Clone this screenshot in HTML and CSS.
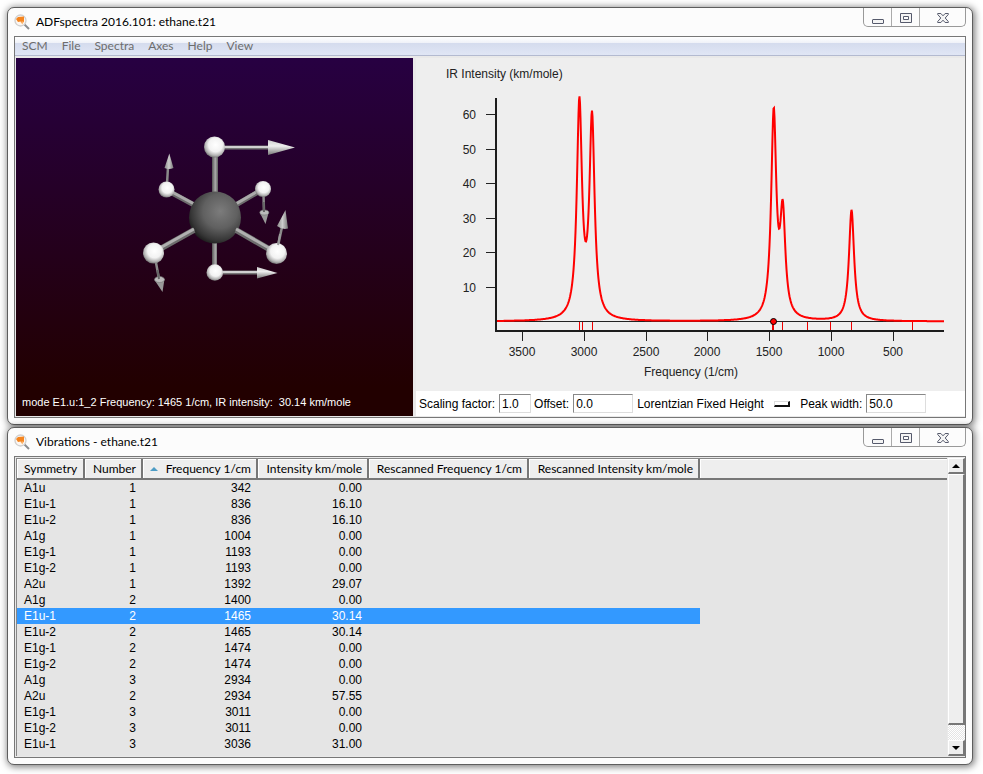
FILE: index.html
```html
<!DOCTYPE html>
<html lang="en">
<head>
<meta charset="utf-8">
<title>ADFspectra 2016.101: ethane.t21</title>
<link rel="stylesheet" href="styles.css">
</head>
<body>
<svg class="defs" width="0" height="0" aria-hidden="true">
  <symbol id="app" viewBox="0 0 16 16">
    <path d="M10.5 10.5 15 15" stroke="#8b8d91" stroke-width="2"/>
    <circle cx="6.500" cy="6.500" r="5.500" fill="#fdf6f0" stroke="#cfcfcf" stroke-width="1.300"/>
    <path d="M2 5 4 3l6-.5V8L8 9 6.500 7.500 4 8Z" fill="#f5851f"/>
    <path d="m6.500 8 2 2.500L9.500 7Z" fill="#fbb36c"/>
  </symbol>
  <symbol id="min" viewBox="0 0 12 12"><rect x=".5" y="6.500" width="11" height="4" rx=".5" fill="#f4f4f4" stroke="#565a6c"/></symbol>
  <symbol id="max" viewBox="0 0 12 12"><path d="M.5 .5h11v9H.5Zm3 3v3h5v-3Z" fill="#f4f4f4" fill-rule="evenodd" stroke="#565a6c"/></symbol>
  <symbol id="close" viewBox="0 0 12 12"><path d="M.7 .5h3.200L6 2.800l2.100-2.300h3.200v1L8.200 5l3.100 3.500v1H8.100L6 7.200l-2.100 2.300H.7v-1L3.800 5 .7 1.500Z" fill="#f4f4f4" stroke="#565a6c"/></symbol>
</svg>

<main class="desktop">
  <section class="window">
    <header class="titlebar">
      <svg class="app-icon" aria-hidden="true"><use href="#app"/></svg>
      <h1>ADFspectra 2016.101: ethane.t21</h1>
      <div class="window-buttons">
        <button aria-label="Minimize"><svg><use href="#min"/></svg></button>
        <button aria-label="Maximize"><svg><use href="#max"/></svg></button>
        <button class="close" aria-label="Close"><svg><use href="#close"/></svg></button>
      </div>
    </header>
    <div class="frame">
      <nav class="menu">
        <button>SCM</button><button>File</button><button>Spectra</button><button>Axes</button><button>Help</button><button>View</button>
      </nav>
      <div class="panes">
        <div class="molecule">
          <svg viewBox="16 58 397 330" aria-label="Ethane vibration">
            <defs>
              <radialGradient id="h" cx=".55" cy=".4" r=".6"><stop offset="0" stop-color="#fff"/><stop offset=".55" stop-color="#f2f2f2"/><stop offset=".85" stop-color="#b0b0b0"/><stop offset="1" stop-color="#777"/></radialGradient>
              <radialGradient id="c" cx=".6" cy=".38" r=".66"><stop offset="0" stop-color="#7c7c7c"/><stop offset=".5" stop-color="#606060"/><stop offset=".85" stop-color="#363636"/><stop offset="1" stop-color="#1c1c1c"/></radialGradient>
              <linearGradient id="rod"><stop offset="0" stop-color="#555"/><stop offset=".55" stop-color="#aaa"/><stop offset="1" stop-color="#606060"/></linearGradient>
              <linearGradient id="cone" x2="0" y2="1"><stop offset="0" stop-color="#ccc"/><stop offset=".4" stop-color="#eee"/><stop offset="1" stop-color="#777"/></linearGradient>
              <linearGradient id="up"><stop offset="0" stop-color="#888"/><stop offset=".5" stop-color="#ccc"/><stop offset="1" stop-color="#777"/></linearGradient>
            </defs>
            <path d="M212 155h6v40h-6zM212 240h5v26h-5z" fill="url(#rod)"/>
            <g stroke="#6d6d6d" stroke-width="5"><path d="M172 193 196 206M258 192 234 206"/></g>
            <g stroke="#aaa" stroke-width="3"><path d="M172 192 196 205M258 191 234 205"/></g>
            <circle cx="215" cy="217.500" r="26" fill="url(#c)"/>
            <path d="M160 249 194 230M269 249 236 230" stroke="#6d6d6d" stroke-width="6"/>
            <path d="M160 248 194 229M269 248 236 229" stroke="#b0b0b0" stroke-width="3"/>
            <path d="M224 147.500h45M222 272.500h36" stroke="#777" stroke-width="4"/>
            <path d="M224 147h45M222 272h36" stroke="#d0d0d0" stroke-width="2"/>
            <path d="M268 140 295 147.500 268 155Z" fill="url(#cone)"/>
            <path d="M257 267 277.500 273 257 278.500Z" fill="url(#cone)"/>
            <path d="M167 184 168 167M263.500 195 264 212M155.500 260 159 279M278 246 282 227" stroke="#8a8a8a" stroke-width="2.500"/>
            <path d="M169.300 153.500 173.500 168Q169 170 164.500 168Z" fill="url(#up)"/>
            <path d="M285.500 210 288 228.500Q282 230 277 226Z" fill="url(#up)"/>
            <path d="M260 213 265.500 224 268.500 213ZM154.500 280 162.500 292 164.500 279Z" fill="#999"/>
            <g fill="#bbb" stroke="#777" stroke-width=".6"><ellipse cx="264.300" cy="212.500" rx="4.500" ry="2.500"/><ellipse cx="159.500" cy="279.500" rx="5" ry="3"/></g>
            <path d="M263.700 202 264 212M157.500 270 159 279" stroke="#666" stroke-width="2"/>
            <g fill="url(#h)"><circle cx="214.500" cy="147" r="10.500"/><circle cx="166.500" cy="189.500" r="8"/><circle cx="263" cy="189" r="8"/><circle cx="153.500" cy="253" r="10.500"/><circle cx="276.500" cy="253.500" r="10.500"/><circle cx="214.800" cy="272.500" r="8.300"/></g>
            <path d="M278 245 280 234" stroke="#999" stroke-width="2"/>
          </svg>
          <p>mode E1.u:1_2 Frequency: 1465 1/cm, IR intensity:&nbsp; 30.14 km/mole</p>
        </div>
        <div class="spectrum">
          <svg class="chart" viewBox="416 58 549 333" aria-label="IR spectrum">
            <text x="446" y="78">IR Intensity (km/mole)</text>
            <g class="end">
              <text x="476" y="119">60</text><text x="476" y="154">50</text><text x="476" y="188">40</text><text x="476" y="223">30</text><text x="476" y="257">20</text><text x="476" y="292">10</text>
            </g>
            <g class="middle">
              <text x="522" y="356">3500</text><text x="584" y="356">3000</text><text x="646" y="356">2500</text><text x="707" y="356">2000</text><text x="769" y="356">1500</text><text x="831" y="356">1000</text><text x="893" y="356">500</text>
              <text x="691" y="376">Frequency (1/cm)</text>
            </g>
            <path class="ticks" d="M486 114.500h10M486 149.500h10M486 183.500h10M486 218.500h10M486 252.500h10M486 287.500h10M522.500 331v10M584.500 331v10M646.500 331v10M707.500 331v10M769.500 331v10M831.500 331v10M893.500 331v10M497 321.500h447"/>
            <path class="modes" d="M579.500 322v8M582.500 322v8M592.500 322v8M772.500 322v8M773.500 322v8M782.500 322v8M807.500 322v8M830.500 322v8M851.500 322v8M912.500 322v8"/>
            <path class="axes" d="M496 98v233h448"/>
            <polyline id="curve" points=""/>
            <circle cx="773.500" cy="321.500" r="3" fill="#f00" stroke="#000"/>
          </svg>
          <form class="controls">
            <label for="scale">Scaling factor:</label><input id="scale" class="short" value="1.0">
            <label for="offset">Offset:</label><input id="offset" value="0.0">
            <span class="shape"><select aria-label="Peak shape"><option>Lorentzian Fixed Height</option></select><i></i></span>
            <label for="width">Peak width:</label><input id="width" value="50.0">
          </form>
        </div>
      </div>
    </div>
  </section>

  <section class="window">
    <header class="titlebar">
      <svg class="app-icon" aria-hidden="true"><use href="#app"/></svg>
      <h1>Vibrations - ethane.t21</h1>
      <div class="window-buttons">
        <button aria-label="Minimize"><svg><use href="#min"/></svg></button>
        <button aria-label="Maximize"><svg><use href="#max"/></svg></button>
        <button class="close" aria-label="Close"><svg><use href="#close"/></svg></button>
      </div>
    </header>
    <div class="frame list">
      <div class="table-area">
        <table>
          <colgroup><col class="c1"><col class="c2"><col class="c3"><col class="c4"><col class="c5"><col class="c6"><col></colgroup>
          <thead><tr><th>Symmetry</th><th>Number</th><th class="sorted">Frequency 1/cm</th><th>Intensity km/mole</th><th>Rescanned Frequency 1/cm</th><th>Rescanned Intensity km/mole</th><th></th></tr></thead>
          <tbody>
            <tr><td>A1u</td><td>1</td><td>342</td><td>0.00</td><td></td><td></td></tr>
            <tr><td>E1u-1</td><td>1</td><td>836</td><td>16.10</td><td></td><td></td></tr>
            <tr><td>E1u-2</td><td>1</td><td>836</td><td>16.10</td><td></td><td></td></tr>
            <tr><td>A1g</td><td>1</td><td>1004</td><td>0.00</td><td></td><td></td></tr>
            <tr><td>E1g-1</td><td>1</td><td>1193</td><td>0.00</td><td></td><td></td></tr>
            <tr><td>E1g-2</td><td>1</td><td>1193</td><td>0.00</td><td></td><td></td></tr>
            <tr><td>A2u</td><td>1</td><td>1392</td><td>29.07</td><td></td><td></td></tr>
            <tr><td>A1g</td><td>2</td><td>1400</td><td>0.00</td><td></td><td></td></tr>
            <tr class="selected"><td>E1u-1</td><td>2</td><td>1465</td><td>30.14</td><td></td><td></td></tr>
            <tr><td>E1u-2</td><td>2</td><td>1465</td><td>30.14</td><td></td><td></td></tr>
            <tr><td>E1g-1</td><td>2</td><td>1474</td><td>0.00</td><td></td><td></td></tr>
            <tr><td>E1g-2</td><td>2</td><td>1474</td><td>0.00</td><td></td><td></td></tr>
            <tr><td>A1g</td><td>3</td><td>2934</td><td>0.00</td><td></td><td></td></tr>
            <tr><td>A2u</td><td>2</td><td>2934</td><td>57.55</td><td></td><td></td></tr>
            <tr><td>E1g-1</td><td>3</td><td>3011</td><td>0.00</td><td></td><td></td></tr>
            <tr><td>E1g-2</td><td>3</td><td>3011</td><td>0.00</td><td></td><td></td></tr>
            <tr><td>E1u-1</td><td>3</td><td>3036</td><td>31.00</td><td></td><td></td></tr>
          </tbody>
        </table>
      </div>
      <div class="scrollbar">
        <button aria-label="Scroll up"><svg viewBox="0 0 8 4"><path d="M0 4 4 0l4 4Z"/></svg></button>
        <div class="thumb"></div>
        <div class="track"></div>
        <button aria-label="Scroll down"><svg viewBox="0 0 8 4"><path d="M0 0 4 4l4-4Z"/></svg></button>
      </div>
    </div>
  </section>
</main>
<script src="spectrum.js"></script>
</body>
</html>
```
FILE: styles.css
```css
* { box-sizing: border-box; }
body {
  margin: 0;
  background: #fff;
  color: #000;
  font: 12px/16px "Liberation Sans", Arial, sans-serif;
}
.defs { position: absolute; }
button, input, select { font: inherit; color: inherit; }

.desktop {
  display: flex;
  flex-direction: column;
  gap: 2px;
  padding: 7px 10px 9px 7px;
}
.window {
  padding: 0 6px 6px;
  border: 1px solid #5e5e5e;
  border-radius: 7px;
  background: #fcfcfc;
  box-shadow: 1px 1px 7px 1px rgba(0, 0, 0, .5);
}
.titlebar {
  display: flex;
  align-items: flex-start;
  height: 28px;
}
.app-icon { width: 16px; height: 16px; margin-top: 6px; }
h1 {
  flex: 1;
  margin: 6px 0 0 6px;
  font: 12px/16px Lato, sans-serif;
}
.window-buttons {
  display: flex;
  height: 19px;
  border: 1px solid #999;
  border-top: 0;
  border-radius: 0 0 5px 5px;
}
.window-buttons button {
  width: 28px;
  padding: 3px 0 0;
  border: 0;
  border-right: 1px solid #aaa;
  background: none;
}
.window-buttons .close { width: 45px; border: 0; }
.window-buttons svg { display: block; width: 12px; height: 12px; margin: 0 auto; }

.frame {
  border: 1px solid #777;
  background: #e9e9e9;
}
.menu {
  display: flex;
  gap: 14px;
  height: 19px;
  padding: 0 7px;
  border-bottom: 1px solid #b3bad0;
  background: linear-gradient(#fff, #eef1f8 35%, #d5dcee 36%, #e0e6f5);
}
.menu button {
  padding: 0;
  border: 0;
  background: none;
  color: #6d6d6d;
  font: 12px/18px Lato, sans-serif;
}
.panes {
  display: grid;
  grid-template-columns: 397fr 549fr;
  gap: 3px;
  padding: 2px 0 1px 1px;
}
.molecule {
  display: flex;
  flex-direction: column;
  justify-content: space-between;
  background: linear-gradient(#270042, #220000 92%);
  color: #fff;
  font-size: 11px;
}
.molecule svg, .chart { display: block; width: 100%; }
.molecule p { margin: 0 6px 6px; }
.spectrum { background: #eee; }
.chart text { fill: #222; }
.chart .end { text-anchor: end; }
.chart .middle { text-anchor: middle; }
.ticks { stroke: #222; }
.modes { stroke: #e00; }
.axes { fill: none; stroke: #1c1c1c; stroke-width: 2; }
#curve { fill: none; stroke: #f00; stroke-width: 2; }
.controls {
  display: flex;
  align-items: center;
  gap: 3px;
  height: 25px;
  padding: 0 3px;
  background: #fff;
}
.controls label { margin-right: 1px; }
.controls input {
  width: 60px;
  height: 19px;
  padding: 0 2px;
  border: 1px solid;
  border-color: #888 #ddd #ddd #888;
  background: #fff;
}
.controls .short { width: 32px; }
.shape { display: flex; align-items: center; gap: 10px; margin: 0 7px 0 1px; }
.shape select {
  appearance: none;
  padding: 0;
  border: 0;
  background: none;
}
.shape i {
  width: 16px;
  height: 6px;
  border: 1px solid #ddd;
  border-right: 2px solid #111;
  border-bottom: 2px solid #111;
}

.list {
  display: flex;
  gap: 1px;
  padding: 1px 0 1px 1px;
}
.table-area {
  flex: 1;
  padding-bottom: 4px;
  border: 1px solid #888;
  border-width: 1px 0 0 1px;
  background: #e5e5e5;
}
table { width: 100%; table-layout: fixed; border-collapse: separate; border-spacing: 0; }
.c1 { width: 68px; }
.c2 { width: 58px; }
.c3 { width: 115px; }
.c4 { width: 111px; }
.c5 { width: 160px; }
.c6 { width: 171px; }
th {
  height: 21px;
  padding: 1px 5px 0;
  border: solid #777;
  border-width: 0 2px 2px 0;
  background: #eee;
  box-shadow: inset 1px 1px #fff;
  font: 12px/18px Lato, sans-serif;
  text-align: right;
  white-space: nowrap;
}
th:first-child { padding-left: 7px; }
th:first-child, td:first-child { text-align: left; }
th:last-child { border-right: 0; }
.sorted::before {
  content: "";
  float: left;
  margin: 7px 0 0 2px;
  border: 4px solid transparent;
  border-top: 0;
  border-bottom-color: #4d9cc5;
}
td { height: 16px; padding: 0 7px; text-align: right; line-height: 16px; }
.selected td { background: #3399ff; color: #fff; }
.scrollbar {
  display: flex;
  flex-direction: column;
  width: 17px;
  background: #eee;
}
.scrollbar button, .thumb {
  border: solid;
  border-width: 1px 2px 2px 1px;
  border-color: #fff #777 #777 #fff;
  background: #eee;
}
.scrollbar button { height: 16px; padding: 0; }
.scrollbar svg { display: block; width: 8px; height: 4px; margin: 0 auto; }
.thumb { flex: 252; }
.track { flex: 15; background: repeating-conic-gradient(#fff 0 25%, #e4e4e4 0 50%) 0 0 / 2px 2px; }
```
FILE: spectrum.js
```js
// Sum of Lorentzian peaks: [frequency in 1/cm, intensity in km/mole].
const peaks = [[3036, 62], [2934, 57.55], [1465, 59], [1392, 29.07], [836, 32.2]];
const halfWidth = 25;
const points = [];
for (let x = 497; x <= 944; x += 0.5) {
  const frequency = 3500 - (x - 522) / 0.1237;
  let y = 0;
  for (const [center, height] of peaks) {
    y += height * halfWidth ** 2 / ((frequency - center) ** 2 + halfWidth ** 2);
  }
  points.push(x + "," + (321.5 - y * 3.45).toFixed(1));
}
document.getElementById("curve").setAttribute("points", points.join(" "));
```
